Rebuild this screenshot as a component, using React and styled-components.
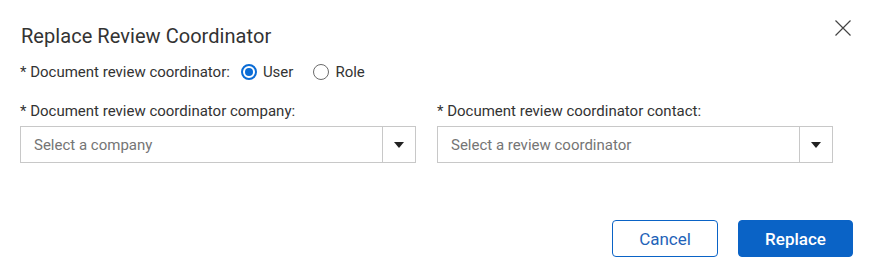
import React, { useState } from 'react';
import styled, { createGlobalStyle } from 'styled-components';

const GlobalStyle = createGlobalStyle`
  html, body {
    margin: 0;
    padding: 0;
    background: #ffffff;
    font-family: Roboto, "Liberation Sans", Arial, sans-serif;
  }
`;

const Dialog = styled.div`
  width: 869px;
  height: 278px;
  box-sizing: border-box;
  padding: 18px 16px 0 20px;
  display: flex;
  flex-direction: column;
  color: #333333;
`;

const Header = styled.div`
  display: flex;
  justify-content: space-between;
  align-items: flex-start;
`;

const Title = styled.h2`
  margin: 6px 0 0 1px;
  font-size: 20px;
  font-weight: 400;
  line-height: 24px;
  letter-spacing: 0.05px;
  color: #333333;
`;

const CloseButton = styled.button`
  border: none;
  background: none;
  padding: 0;
  margin: 2px 2px 0 0;
  width: 16px;
  height: 16px;
  cursor: pointer;
  color: #444444;
  display: flex;
`;

const RadioRow = styled.div`
  display: flex;
  align-items: center;
  margin-top: 14px;
  font-size: 15px;
  line-height: 20px;
`;

const FieldLabel = styled.span`
  margin-right: 11px;
`;

const RadioOption = styled.label`
  display: flex;
  align-items: center;
  gap: 6px;
  margin-right: ${p => (p.$spaced ? '20px' : '0')};
  cursor: pointer;
`;

const RadioCircle = styled.span`
  width: 16px;
  height: 16px;
  box-sizing: border-box;
  border-radius: 50%;
  border: ${p => (p.$checked ? '2px solid #0a6cd6' : '1px solid #6b6b6b')};
  display: flex;
  align-items: center;
  justify-content: center;

  &::after {
    content: '';
    width: 8px;
    height: 8px;
    border-radius: 50%;
    background: ${p => (p.$checked ? '#0a6cd6' : 'transparent')};
  }
`;

const Fields = styled.div`
  display: grid;
  grid-template-columns: 396px 396px;
  gap: 21px;
  margin-top: 19px;
`;

const Field = styled.div`
  display: flex;
  flex-direction: column;
`;

const Label = styled.div`
  font-size: 15px;
  line-height: 20px;
  margin-bottom: 5px;
`;

const Select = styled.div`
  display: flex;
  height: 37px;
  box-sizing: border-box;
  border: 1px solid #c8c8c8;
  background: #ffffff;
`;

const Placeholder = styled.div`
  flex: 1;
  display: flex;
  align-items: center;
  padding-left: 13px;
  font-size: 15px;
  color: #757575;
`;

const Arrow = styled.div`
  width: 32px;
  border-left: 1px solid #c8c8c8;
  display: flex;
  align-items: center;
  justify-content: center;
  color: #222222;
`;

const Footer = styled.div`
  display: flex;
  justify-content: flex-end;
  gap: 20px;
  margin-top: auto;
  margin-bottom: 21px;
`;

const Button = styled.button`
  height: 37px;
  min-width: ${p => p.$width}px;
  box-sizing: border-box;
  border-radius: 4px;
  font-family: Roboto, "Liberation Sans", Arial, sans-serif;
  font-size: 17px;
  cursor: pointer;
  border: 1px solid #0a63c6;
  background: ${p => (p.$primary ? '#0a63c6' : '#ffffff')};
  color: ${p => (p.$primary ? '#ffffff' : '#1f63b8')};
  font-weight: ${p => (p.$primary ? 500 : 400)};
`;

const CaretDown = () => (
  <svg width="10" height="6" viewBox="0 0 10 6">
    <path d="M0 0h10L5 6z" fill="currentColor" />
  </svg>
);

const CloseIcon = () => (
  <svg width="16" height="16" viewBox="0 0 16 16">
    <path d="M0.5 0.5L15.5 15.5M15.5 0.5L0.5 15.5" stroke="currentColor" strokeWidth="1.2" fill="none" />
  </svg>
);

const App = () => {
  const [mode, setMode] = useState('user');

  return (
    <>
      <GlobalStyle />
      <Dialog>
        <Header>
          <Title>Replace Review Coordinator</Title>
          <CloseButton aria-label="Close">
            <CloseIcon />
          </CloseButton>
        </Header>

        <RadioRow>
          <FieldLabel>* Document review coordinator:</FieldLabel>
          <RadioOption $spaced onClick={() => setMode('user')}>
            <RadioCircle $checked={mode === 'user'} />
            User
          </RadioOption>
          <RadioOption onClick={() => setMode('role')}>
            <RadioCircle $checked={mode === 'role'} />
            Role
          </RadioOption>
        </RadioRow>

        <Fields>
          <Field>
            <Label>* Document review coordinator company:</Label>
            <Select>
              <Placeholder>Select a company</Placeholder>
              <Arrow><CaretDown /></Arrow>
            </Select>
          </Field>
          <Field>
            <Label>* Document review coordinator contact:</Label>
            <Select>
              <Placeholder>Select a review coordinator</Placeholder>
              <Arrow><CaretDown /></Arrow>
            </Select>
          </Field>
        </Fields>

        <Footer>
          <Button $width={106}>Cancel</Button>
          <Button $primary $width={115}>Replace</Button>
        </Footer>
      </Dialog>
    </>
  );
};

export default App;
